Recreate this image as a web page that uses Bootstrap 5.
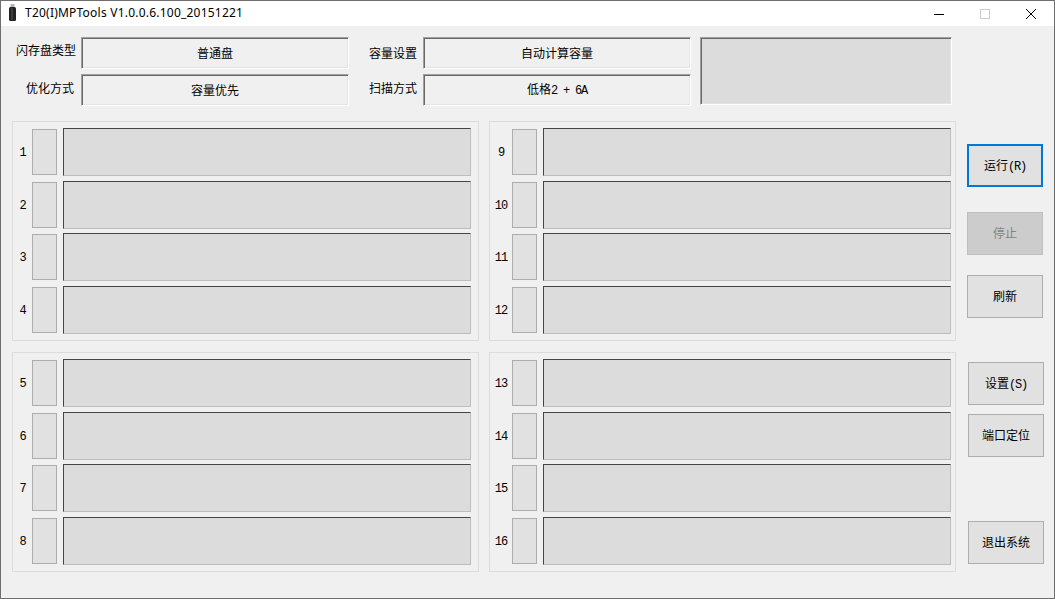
<!DOCTYPE html>
<html lang="zh-CN">
<head>
<meta charset="utf-8">
<title>T20(I)MPTools</title>
<link rel="stylesheet" href="https://cdn.jsdelivr.net/npm/bootstrap@5.3.0/dist/css/bootstrap.min.css">
<style>
html,body{margin:0;height:100%;background:#f0f0f0;overflow:hidden}
body{font-family:"Noto Sans CJK SC","Liberation Sans",sans-serif;font-size:12px;line-height:14px;color:#000}
.app-win{width:1055px;height:599px;border:1px solid #6e6e6e}
.title-bar{height:25px;background:#fff}
.app-icon{margin:0 9px 2px 8px;width:7px;height:17px}
.title-text{font-family:"Noto Sans",sans-serif;font-size:12px;line-height:14px;letter-spacing:.22px;padding-bottom:1px}
.win-ctl{width:46px;height:25px}
.client{background:#f0f0f0;flex:1 1 auto}
.left-pane{width:956px;padding:11px 0 0 11px}
.head-grid{display:grid;grid-template-columns:69px 268px 74px 268px 261px;grid-template-rows:32px 32px;row-gap:5px}
.lbl{white-space:nowrap;text-align:right}
.lbl-a{padding:6px 5px 0 0}
.lbl-b{padding:7px 7px 0 0}
.lbl-c{padding:9px 6px 0 0}
.lbl-d{padding:7px 6px 0 0}
.sunk{border:1px solid;border-color:#a0a0a0 #fff #fff #a0a0a0;box-shadow:inset 1px 1px #696969,inset -1px -1px #e3e3e3}
.field-box{background:#f0f0f0}
.preview-box{grid-column:5;grid-row:1/3;margin-left:9px;background:#dcdcdc;height:68px}
.group-grid{display:grid;grid-template-columns:467px 467px;grid-template-rows:220px 220px;column-gap:10px;row-gap:11px;margin-top:15px}
.slot-group{border:1px solid #dcdcdc;padding:6px 7px 0 0;display:grid;grid-auto-rows:48px;row-gap:4.667px}
.slot-row{display:flex;align-items:center}
.slot-num{width:19px;text-align:center;font-family:"Liberation Mono",monospace;font-size:12px;letter-spacing:-1px;padding-top:2px}
.group-r .slot-num{width:22px}
.slot-led{width:25px;height:46px;background:#e1e1e1;border:1px solid #adadad}
.slot-bar{width:408px;height:48px;margin-left:6px;background:#dcdcdc;border:1px solid;border-color:#454545 #bdbdbd #bdbdbd #454545}
.mono{font-family:"Liberation Mono",monospace;font-size:12px;letter-spacing:-1.2px}
.act-pane{padding:118px 0 0 10px}
.act-btn{width:76px;height:43px;padding:0 0 1px;border-radius:0;background:#e1e1e1;border:1px solid #adadad;color:#000;font-size:12px;line-height:14px;box-shadow:none}
.act-btn:hover{background:#e1e1e1;border-color:#adadad;color:#000}
.act-run,.act-run:hover{border:2px solid #0078d7}
.act-low{padding:1px 0 0}
.act-stop:disabled{background:#ccc;border-color:#bfbfbf;color:#838383;opacity:1}
.act-shift{margin-left:1px}
.mt-25{margin-top:25px}
.mt-20{margin-top:20px}
.mt-44{margin-top:44px}
.mt-9{margin-top:9px}
.mt-64{margin-top:64px}
</style>
</head>
<body>
<div class="app-win d-flex flex-column">
  <div class="title-bar d-flex align-items-center">
    <svg class="app-icon" viewBox="0 0 7 17" aria-hidden="true"><rect x="1.5" y="0" width="4" height="4" fill="#b5b5b5"/><rect x="0" y="3" width="7" height="14" rx="1.5" fill="#222"/><rect x="2.5" y="4" width="1" height="12" fill="#555"/></svg>
    <span class="title-text">T20(I)MPTools V1.0.0.6.100_20151221</span>
    <div class="ms-auto d-flex">
      <div class="win-ctl d-flex align-items-center justify-content-center"><svg width="10" height="10" viewBox="0 0 10 10" aria-hidden="true"><path d="M0 5.5H10" stroke="#000" stroke-width="1"/></svg></div>
      <div class="win-ctl d-flex align-items-center justify-content-center"><svg width="10" height="10" viewBox="0 0 10 10" aria-hidden="true"><rect x=".5" y=".5" width="9" height="9" fill="none" stroke="#ccc"/></svg></div>
      <div class="win-ctl d-flex align-items-center justify-content-center"><svg width="10" height="10" viewBox="0 0 10 10" aria-hidden="true"><path d="M0 0L10 10M10 0L0 10" stroke="#000" stroke-width="1"/></svg></div>
    </div>
  </div>
  <div class="client d-flex">
    <div class="left-pane">
      <div class="head-grid">
        <div class="sunk preview-box"></div>
        <div class="lbl lbl-a">闪存盘类型</div>
        <div class="sunk field-box d-flex align-items-center justify-content-center">普通盘</div>
        <div class="lbl lbl-c">容量设置</div>
        <div class="sunk field-box d-flex align-items-center justify-content-center">自动计算容量</div>
        <div class="lbl lbl-b">优化方式</div>
        <div class="sunk field-box d-flex align-items-center justify-content-center">容量优先</div>
        <div class="lbl lbl-d">扫描方式</div>
        <div class="sunk field-box d-flex align-items-center justify-content-center"><span>低格<span class="mono">2 + 6A</span></span></div>
      </div>
      <div class="group-grid">
        <div class="slot-group">
          <div class="slot-row"><span class="slot-num">1</span><div class="slot-led"></div><div class="slot-bar"></div></div>
          <div class="slot-row"><span class="slot-num">2</span><div class="slot-led"></div><div class="slot-bar"></div></div>
          <div class="slot-row"><span class="slot-num">3</span><div class="slot-led"></div><div class="slot-bar"></div></div>
          <div class="slot-row"><span class="slot-num">4</span><div class="slot-led"></div><div class="slot-bar"></div></div>
        </div>
        <div class="slot-group group-r">
          <div class="slot-row"><span class="slot-num">9</span><div class="slot-led"></div><div class="slot-bar"></div></div>
          <div class="slot-row"><span class="slot-num">10</span><div class="slot-led"></div><div class="slot-bar"></div></div>
          <div class="slot-row"><span class="slot-num">11</span><div class="slot-led"></div><div class="slot-bar"></div></div>
          <div class="slot-row"><span class="slot-num">12</span><div class="slot-led"></div><div class="slot-bar"></div></div>
        </div>
        <div class="slot-group">
          <div class="slot-row"><span class="slot-num">5</span><div class="slot-led"></div><div class="slot-bar"></div></div>
          <div class="slot-row"><span class="slot-num">6</span><div class="slot-led"></div><div class="slot-bar"></div></div>
          <div class="slot-row"><span class="slot-num">7</span><div class="slot-led"></div><div class="slot-bar"></div></div>
          <div class="slot-row"><span class="slot-num">8</span><div class="slot-led"></div><div class="slot-bar"></div></div>
        </div>
        <div class="slot-group group-r">
          <div class="slot-row"><span class="slot-num">13</span><div class="slot-led"></div><div class="slot-bar"></div></div>
          <div class="slot-row"><span class="slot-num">14</span><div class="slot-led"></div><div class="slot-bar"></div></div>
          <div class="slot-row"><span class="slot-num">15</span><div class="slot-led"></div><div class="slot-bar"></div></div>
          <div class="slot-row"><span class="slot-num">16</span><div class="slot-led"></div><div class="slot-bar"></div></div>
        </div>
      </div>
    </div>
    <div class="act-pane d-flex flex-column align-items-start">
      <button type="button" class="btn act-btn act-run act-low">运行<span class="mono">(R)</span></button>
      <button type="button" class="btn act-btn act-stop mt-25" disabled>停止</button>
      <button type="button" class="btn act-btn mt-20">刷新</button>
      <button type="button" class="btn act-btn act-shift act-low mt-44">设置<span class="mono">(S)</span></button>
      <button type="button" class="btn act-btn act-shift mt-9">端口定位</button>
      <button type="button" class="btn act-btn act-shift mt-64">退出系统</button>
    </div>
  </div>
</div>
<script src="https://cdn.jsdelivr.net/npm/bootstrap@5.3.0/dist/js/bootstrap.bundle.min.js"></script>
</body>
</html>
